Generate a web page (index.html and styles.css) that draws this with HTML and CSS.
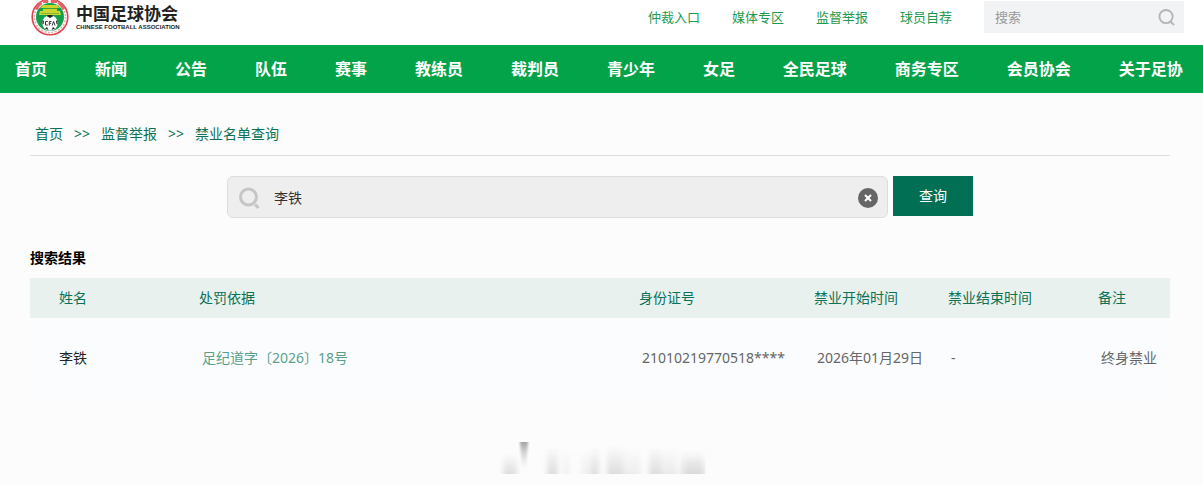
FILE: index.html
```html
<!DOCTYPE html>
<html lang="zh-CN">
<head>
<meta charset="utf-8">
<title>中国足球协会</title>
<link rel="stylesheet" href="styles.css">
</head>
<body>
<header class="top">
  <a class="brand" href="#">
    <svg class="emblem" viewBox="0 0 38 44" aria-hidden="true">
      <circle cx="19" cy="25" r="17.800" fill="#fff" stroke="#dc4650" stroke-width="1.600"/>
      <circle cx="19" cy="25" r="15.600" fill="none" stroke="#f0a5a8" stroke-width="1.600" stroke-dasharray="2 1.500"/>
      <circle cx="19" cy="25" r="14" fill="#12a04c"/>
      <path d="M4 17l2-4 4-4 1 3-3 3-1 3zM34 17l-2-4-4-4-1 3 3 3 1 3zM12 8h5v3h-5zM20 8h6v3h-6z" fill="#e3646c"/>
      <path d="M12 13h14l3 3H9zM12 17h14v2H12zM9 19h20l1 4H8z" fill="#c9d62f"/>
      <path d="M12 16.500h14M10 21.500h18" stroke="#5f9f2c" stroke-width="0.600"/>
      <circle cx="19" cy="31" r="7.800" fill="#fff"/>
      <path d="M15.500 24l3.500 2 3.500-2-1.500-1h-4zM11.500 28l1.500 1-.5 3-1 .5zM26.500 28l-1.500 1 .5 3 1 .5zM14 36.500l2-1.500 1.500 3zM24 36.500l-2-1.500-1.500 3z" fill="#222"/>
      <path d="M16.800 29.500h-2.300v3.500h2.300M18.300 33.500v-4h2.200M18.300 31.300h1.800M21.200 33.500l1.400-4 1.400 4" fill="none" stroke="#222" stroke-width="0.900"/>
    </svg>
    <span class="brand-text"><strong class="brand-cn">中国足球协会</strong><span class="brand-en">CHINESE FOOTBALL ASSOCIATION</span></span>
  </a>
  <nav class="quick" aria-label="快捷入口">
    <a href="#">仲裁入口</a><a href="#">媒体专区</a><a href="#">监督举报</a><a href="#">球员自荐</a>
  </nav>
  <form class="site-search">
    <input type="text" placeholder="搜索" aria-label="站内搜索">
    <button type="button" aria-label="搜索"><svg viewBox="0 0 18 18" aria-hidden="true"><circle cx="8.500" cy="8" r="7"/><path d="M13 13l4 4"/></svg></button>
  </form>
</header>
<nav class="main-nav" aria-label="主导航">
  <a href="#">首页</a><a href="#">新闻</a><a href="#">公告</a><a href="#">队伍</a><a href="#">赛事</a><a href="#">教练员</a><a href="#">裁判员</a><a href="#">青少年</a><a href="#">女足</a><a href="#">全民足球</a><a href="#">商务专区</a><a href="#">会员协会</a><a href="#">关于足协</a>
</nav>
<main class="content">
  <nav class="crumbs" aria-label="面包屑">
    <a href="#">首页</a><span class="sep">&gt;&gt;</span><a href="#">监督举报</a><span class="sep">&gt;&gt;</span><a href="#">禁业名单查询</a>
  </nav>
  <form class="query">
    <div class="query-box">
      <svg class="lens" viewBox="0 0 22 22" aria-hidden="true"><circle cx="9.500" cy="10" r="8"/><path d="M16 17.500l3.500 3.500"/></svg>
      <input type="text" value="李铁" aria-label="姓名查询">
      <button class="clear" type="button" aria-label="清除"><svg viewBox="0 0 20 20" aria-hidden="true"><circle cx="10" cy="10" r="10"/><path d="M7 7l6 6M13 7l-6 6"/></svg></button>
    </div>
    <button class="submit" type="button">查询</button>
  </form>
  <h1 class="results-title">搜索结果</h1>
  <table class="results">
    <colgroup><col class="c-name"><col class="c-basis"><col class="c-id"><col class="c-start"><col class="c-end"><col class="c-note"></colgroup>
    <thead><tr><th>姓名</th><th>处罚依据</th><th>身份证号</th><th>禁业开始时间</th><th>禁业结束时间</th><th>备注</th></tr></thead>
    <tbody><tr><td class="name">李铁</td><td><a href="#">足纪道字〔2026〕18号</a></td><td>21010219770518****</td><td>2026年01月29日</td><td>-</td><td>终身禁业</td></tr></tbody>
  </table>
  <svg class="smudge" viewBox="0 0 216 38" aria-hidden="true">
    <defs>
      <linearGradient id="rise" x1="0" y1="0" x2="0" y2="1"><stop offset="0" stop-color="#d4d4d4" stop-opacity="0"/><stop offset="1" stop-color="#d4d4d4" stop-opacity="0.750"/></linearGradient>
      <linearGradient id="fall" x1="0" y1="0" x2="0" y2="1"><stop offset="0" stop-color="#a4a4a4"/><stop offset="1" stop-color="#ddd" stop-opacity="0"/></linearGradient>
      <filter id="soft" x="-5%" y="-5%" width="110%" height="110%"><feGaussianBlur stdDeviation="2.500 0.400"/></filter>
      <filter id="edge" x="-50%" y="-10%" width="200%" height="120%"><feGaussianBlur stdDeviation="1 0.500"/></filter>
    </defs>
    <g filter="url(#soft)" fill="url(#rise)">
      <path d="M10 14h14v20H10z"/><path d="M54 6h11v28H54z"/><path d="M70 8h7v26h-7z" opacity="0.400"/><path d="M88 8h10v26H88z" opacity="0.400"/><path d="M98 6h8v28h-8z"/><path d="M114 5h16v29h-16z"/><path d="M130 8h18v26h-18z" opacity="0.500"/><path d="M156 6h12v28h-12z"/><path d="M168 8h16v26h-16z" opacity="0.600"/><path d="M188 10h22v24h-22z"/>
    </g>
    <path d="M27 2h8l-2 28h-4z" fill="url(#fall)" filter="url(#edge)"/>
    <path d="M194 16h18v18h-18z" fill="url(#rise)" opacity="0.500"/>
  </svg>
</main>
</body>
</html>
```

FILE: styles.css
```css
* { box-sizing: border-box; }
body {
  margin: 0;
  background: #fcfcfc;
  color: #666;
  font: 14px/20px "Noto Sans", "Noto Sans CJK SC", sans-serif;
}
a { color: inherit; text-decoration: none; }
button, input { font: inherit; border: 0; padding: 0; background: none; }
svg { display: block; }

.top {
  display: flex;
  align-items: flex-start;
  height: 45px;
  padding: 0 19px 0 31px;
  background: #fff;
}
.brand { display: flex; align-items: flex-start; gap: 7px; margin-right: auto; }
.emblem { width: 38px; height: 44px; margin-top: -8px; }
.brand-text { display: flex; flex-direction: column; padding-top: 5px; color: #222; white-space: nowrap; }
.brand-cn { font-size: 17px; line-height: 18px; font-weight: 700; }
.brand-en { font: bold 6px/8px "Liberation Sans", Arial, sans-serif; }
.quick {
  display: flex;
  gap: 32px;
  padding: 7px 32px 0 0;
  color: #1c9a50;
  font-size: 13px;
}
.site-search {
  display: flex;
  align-items: center;
  width: 200px;
  height: 32px;
  margin-top: 1px;
  padding: 0 9px 0 11px;
  background: #f1f3f5;
}
.site-search input { flex: 1; min-width: 0; font-size: 13px; color: #666; }
.site-search input::placeholder { color: #999; opacity: 1; }
.site-search svg { width: 17px; height: 17px; fill: none; stroke: #b3b5b7; stroke-width: 2; }

.main-nav {
  display: flex;
  justify-content: space-between;
  padding: 0 20px 0 15px;
  background: #03a34a;
  color: #fff;
  font-size: 16px;
  font-weight: 700;
  line-height: 48px;
  white-space: nowrap;
}

.content { padding: 0 33px 0 30px; }
.crumbs {
  display: flex;
  gap: 11px;
  padding: 31px 5px 11px;
  border-bottom: 1px solid #ddd;
  color: #0b7256;
}
.query { display: flex; justify-content: center; gap: 5px; padding-top: 20px; }
.query-box {
  display: flex;
  align-items: center;
  width: 58%;
  height: 42px;
  padding: 1px 9px 0 11px;
  border: 1px solid #ddd;
  border-radius: 6px;
  background: #eee;
}
.lens { width: 22px; height: 22px; margin-right: 13px; fill: none; stroke: #c6c6c6; stroke-width: 3; }
.query-box input { flex: 1; min-width: 0; color: #333; }
.clear svg { width: 20px; height: 20px; fill: #666; stroke: #fff; stroke-width: 2; }
.clear circle { stroke: none; }
.submit { width: 80px; height: 40px; background: #006f53; color: #fff; }

.results-title { margin: 30px 0 10px; color: #000; font-size: 14px; font-weight: 700; line-height: 20px; }
.results { width: 100%; border-collapse: collapse; table-layout: fixed; background: #fafcfe; white-space: nowrap; }
.results th { height: 40px; padding: 0; background: #e9f1ee; color: #0b7256; font-weight: 400; text-align: left; }
.results td { height: 82px; padding: 0 0 2px 3px; }
.results th:first-child, .results td:first-child { padding-left: 29px; }
.results .name { color: #222; }
.results td a { color: #5a9f8c; }
.c-name { width: 169px; }
.c-basis { width: 440px; }
.c-id { width: 175px; }
.c-start { width: 134px; }
.c-end { width: 150px; }
.smudge { width: 216px; height: 38px; margin: 40px 0 0 463px; }
```
